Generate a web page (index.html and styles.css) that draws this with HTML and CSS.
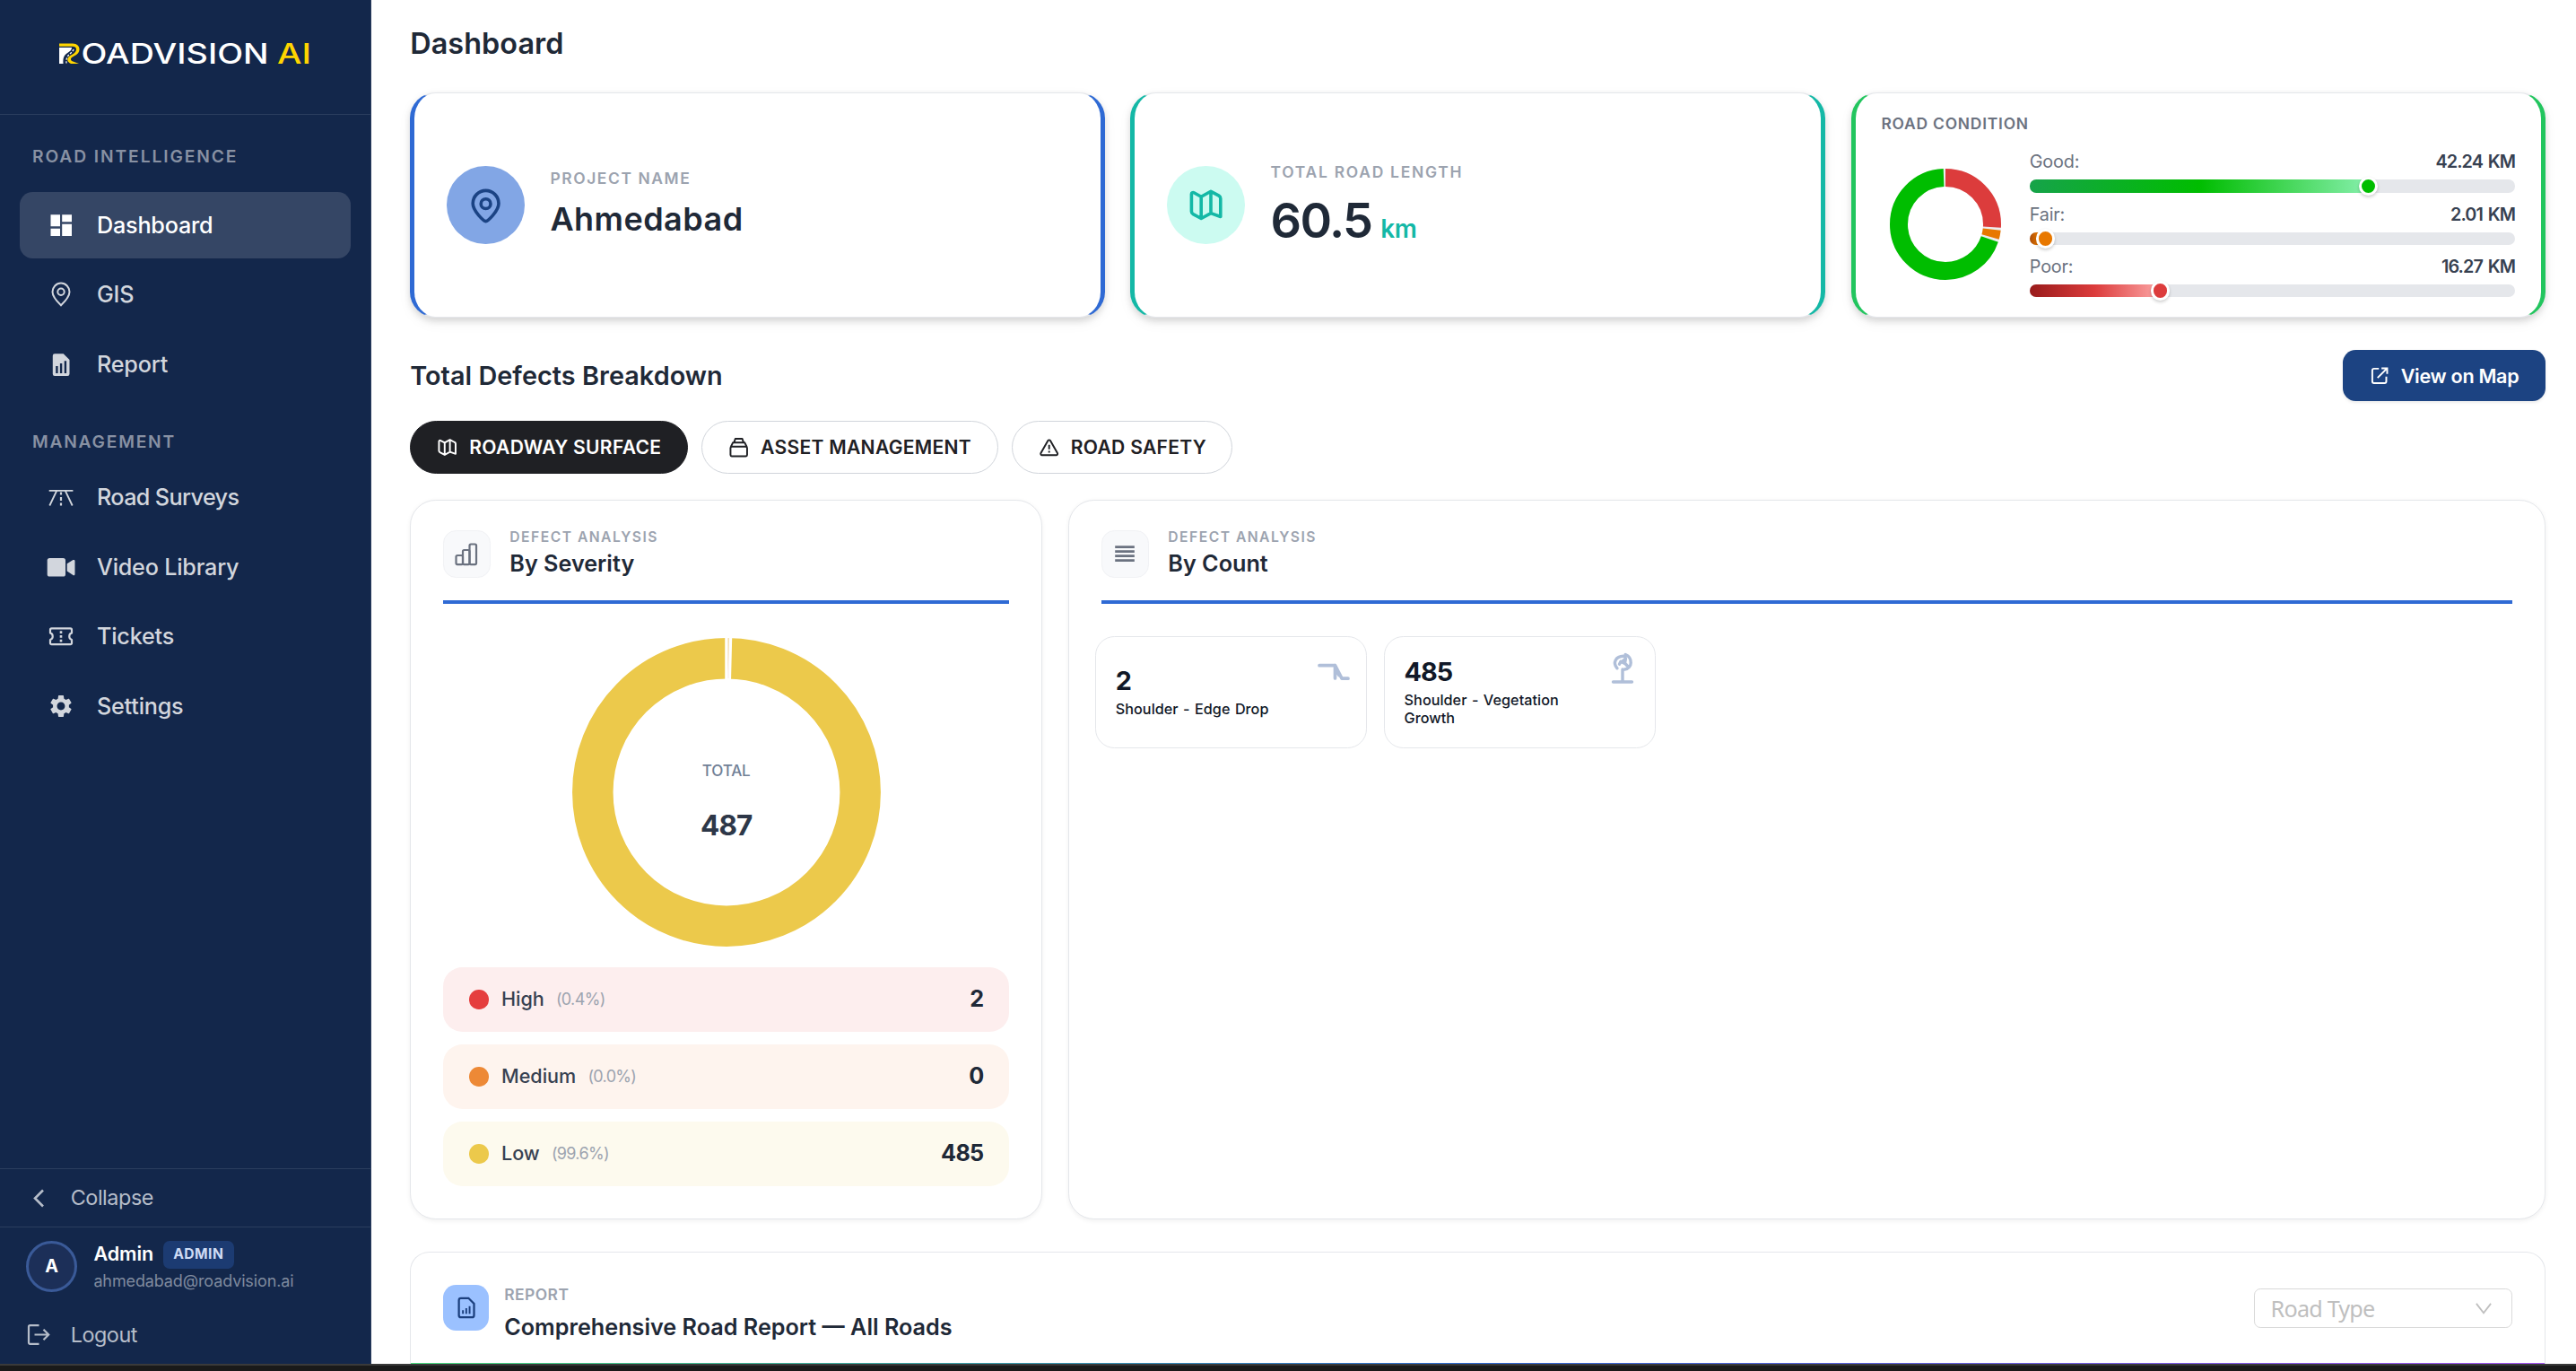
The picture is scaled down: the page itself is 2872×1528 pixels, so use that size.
FILE: index.html
```html
<!DOCTYPE html>
<html lang="en">
<head>
<meta charset="utf-8">
<title>RoadVision AI</title>
<link rel="stylesheet" href="styles.css">
</head>
<body>
<div class="app">
  <aside class="sidebar">
    <div class="brand">
      <svg class="logo" viewBox="0 0 280 26">
        <path fill="#ffd500" d="M1 1.500h15c5 0 7.500 3 7.500 6.500 0 3.500-2 5.500-6 7.500-3.500 1.700-4.500 3.200-2.500 5.500l8 3h-9c-4-2-5-5-2-8 2-2 8-3.500 8-8 0-2.500-2-3.300-4-3.300H1z"/>
        <path fill="#fff" d="M1 6h14c0 3-2.500 4.500-5.500 6.500C6 15 5 18 5.500 24H1z"/>
        <path fill="none" stroke="#fff" stroke-width="1.300" stroke-dasharray="2.500 1.500" d="M17 8c-1.500 5-9 5-8 15.500"/>
        <text class="logo-word" x="25.500" y="24" textLength="209" lengthAdjust="spacingAndGlyphs">OADVISION</text>
        <text class="logo-word logo-ai" x="244" y="24" textLength="38" lengthAdjust="spacingAndGlyphs">AI</text>
      </svg>
    </div>
    <nav class="nav">
      <div class="nav-label">ROAD INTELLIGENCE</div>
      <div class="nav-items">
        <a class="nav-item active"><svg class="ni" viewBox="0 0 36 36" fill="currentColor"><path d="M6.500 6.300H17v12.900H6.500zM6.500 21.700H17V30H6.500zM19.200 6.300H30v8H19.200zM19.200 16.700H30V30H19.200z"/></svg><span>Dashboard</span></a>
        <a class="nav-item"><svg class="ni" viewBox="0 0 36 36" fill="none" stroke="currentColor" stroke-width="2"><path d="M18 30.300C13 25.500 8.500 20.500 8.500 15.300a9.500 9.700 0 0 1 19 0C27.500 20.500 23 25.500 18 30.300z"/><circle cx="18" cy="15.200" r="3.700"/></svg><span>GIS</span></a>
        <a class="nav-item"><svg class="ni" viewBox="0 0 36 36" fill="currentColor" fill-rule="evenodd"><path d="M11 6.200h9.700l6.800 6.800v15.700a2.200 2.200 0 0 1-2.200 2.200H11a2.200 2.200 0 0 1-2.200-2.200V8.400A2.200 2.200 0 0 1 11 6.200zM12.200 20v8h2.400v-8zM16.900 17v11h2.400V17zM21.700 14.200V28h2.400V14.200z"/></svg><span>Report</span></a>
      </div>
      <div class="nav-label second">MANAGEMENT</div>
      <div class="nav-items">
        <a class="nav-item"><svg class="ni" viewBox="0 0 36 36" fill="none" stroke="currentColor" stroke-width="1.800"><path d="M4.700 10.900h26.700M13.200 11L5.300 27.500M22.800 11l7.900 16.500"/><path d="M18 12.500v3M18 18v4M18 24.500v3" stroke-width="2.200"/></svg><span class="tight">Road Surveys</span></a>
        <a class="nav-item"><svg class="ni" viewBox="0 0 36 36" fill="currentColor"><rect x="2.700" y="8" width="20.300" height="20.600" rx="2.600"/><path d="M24.700 14.300l6.800-4.200a1.300 1.300 0 0 1 2 1v15a1.300 1.300 0 0 1-2 1l-6.800-4.600z"/></svg><span>Video Library</span></a>
        <a class="nav-item"><svg class="ni" viewBox="0 0 36 36" fill="none" stroke="currentColor" stroke-width="2.200" stroke-linejoin="round"><path d="M7.500 9.400h21a1.500 1.500 0 0 1 1.500 1.500v3.500a4 4 0 0 0 0 7.600v3.700a1.500 1.500 0 0 1-1.500 1.500h-21A1.500 1.500 0 0 1 6 25.700V22a4 4 0 0 0 0-7.600v-3.500a1.500 1.500 0 0 1 1.500-1.500z"/><path d="M18 12.200v2.800M18 17v2.800M18 21.700v2.800" stroke-width="2.600"/></svg><span>Tickets</span></a>
        <a class="nav-item"><svg class="ni" viewBox="0 0 36 36" fill="currentColor"><path transform="translate(3.100 3.100) scale(1.240)" d="M19.140 12.940c.04-.3.060-.61.060-.94 0-.32-.02-.64-.07-.94l2.030-1.580c.18-.14.230-.41.120-.61l-1.920-3.320c-.12-.22-.37-.29-.59-.22l-2.390.960c-.5-.38-1.030-.7-1.620-.94L14.400 2.810c-.04-.24-.24-.41-.48-.41h-3.840c-.24 0-.43.170-.47.410L9.250 5.350c-.59.240-1.130.57-1.620.94L5.240 5.330c-.22-.08-.47 0-.59.220L2.740 8.870c-.12.210-.08.470.120.610l2.030 1.580c-.05.300-.09.630-.09.940s.02.640.070.940l-2.030 1.580c-.18.140-.23.410-.12.610l1.920 3.320c.12.220.37.290.59.220l2.390-.96c.5.380 1.030.7 1.620.94l.36 2.540c.05.240.24.410.48.410h3.840c.24 0 .44-.17.470-.41l.36-2.540c.59-.24 1.130-.56 1.620-.94l2.390.96c.22.080.47 0 .59-.22l1.920-3.320c.12-.22.070-.47-.12-.61l-2.010-1.580zM12 15.600c-1.980 0-3.600-1.620-3.600-3.600s1.620-3.600 3.600-3.600 3.600 1.620 3.600 3.600-1.620 3.600-3.600 3.600z"/></svg><span>Settings</span></a>
      </div>
    </nav>
    <div class="collapse"><svg class="fi" viewBox="0 0 36 36" fill="none" stroke="currentColor" stroke-width="2.600"><path d="M23 9.500L14 18.500l9 9"/></svg><span>Collapse</span></div>
    <div class="account">
      <div class="user">
        <div class="avatar">A</div>
        <div class="user-info">
          <div class="user-row"><span class="user-name">Admin</span><span class="role">ADMIN</span></div>
          <div class="email">ahmedabad@roadvision.ai</div>
        </div>
      </div>
      <div class="logout"><svg class="fi" viewBox="0 0 36 36" fill="none" stroke="currentColor" stroke-width="2.200"><path d="M18.500 8.200H8.500a1.500 1.500 0 0 0-1.500 1.500v17.600a1.500 1.500 0 0 0 1.500 1.500h10M13.500 18.500h15M23.500 12.800l5.700 5.700-5.700 5.700"/></svg><span>Logout</span></div>
    </div>
  </aside>

  <main class="main">
    <h1 class="page-title">Dashboard</h1>
    <section class="cards">
      <div class="card blue">
        <div class="circle"><svg viewBox="0 0 24 24" fill="none" stroke="currentColor" stroke-width="2"><path d="M12 22c-1.200 0-8-6.300-8-11a8 8 0 0 1 16 0c0 4.700-6.800 11-8 11z"/><circle cx="12" cy="11.200" r="3"/></svg></div>
        <div><div class="card-label">PROJECT NAME</div><div class="card-name">Ahmedabad</div></div>
      </div>
      <div class="card teal">
        <div class="circle"><svg viewBox="0 0 24 24" fill="none" stroke="currentColor" stroke-width="2" stroke-linejoin="round"><path d="M3 5.200a1 1 0 0 1 1.500-.9L9 6.800l6-3.300 5 2.700a2 2 0 0 1 1 1.700v11.300L15 17l-6 3.300-5-2.700a2 2 0 0 1-1-1.700zM9 6.800v13.500M15 3.500V17"/></svg></div>
        <div><div class="card-label">TOTAL ROAD LENGTH</div><div class="card-value"><span class="num">60.5</span><span class="unit">km</span></div></div>
      </div>
      <div class="card green">
        <div class="cond-title">ROAD CONDITION</div>
        <div class="cond">
          <svg class="cond-donut" viewBox="0 0 144 144" fill="none" stroke-width="20">
            <g transform="rotate(-90 72 72)">
              <circle cx="72" cy="72" r="52" stroke="#ededf0"/>
              <circle cx="72" cy="72" r="52" stroke="#dc3c3c" pathLength="360" stroke-dasharray="93.500 266.500"/>
              <circle cx="72" cy="72" r="52" stroke="#e87800" pathLength="360" stroke-dasharray="9.400 350.600" stroke-dashoffset="-96.300"/>
              <circle cx="72" cy="72" r="52" stroke="#00bd00" pathLength="360" stroke-dasharray="249.200 110.800" stroke-dashoffset="-108.600"/>
            </g>
          </svg>
          <div class="bars">
            <div><div class="bar-head"><span>Good:</span><b>42.24 KM</b></div><div class="track"><div class="fill good" style="width:69.800%"><i></i></div></div></div>
            <div><div class="bar-head"><span>Fair:</span><b>2.01 KM</b></div><div class="track"><div class="fill fair" style="width:3.300%"><i></i></div></div></div>
            <div><div class="bar-head"><span>Poor:</span><b>16.27 KM</b></div><div class="track"><div class="fill poor" style="width:26.900%"><i></i></div></div></div>
          </div>
        </div>
      </div>
    </section>

    <div class="section-head">
      <h2>Total Defects Breakdown</h2>
      <button class="map-btn"><svg viewBox="0 0 24 24" fill="none" stroke="currentColor" stroke-width="2"><path d="M11.500 4H6a2 2 0 0 0-2 2v12.500a2 2 0 0 0 2 2h12a2 2 0 0 0 2-2V13M14.500 3.500H21V10M21 3.500L10 14.500"/></svg>View on Map</button>
    </div>

    <div class="tabs">
      <button class="tab on"><svg viewBox="0 0 24 24" fill="none" stroke="currentColor" stroke-width="2" stroke-linejoin="round"><path d="M2.500 5a1 1 0 0 1 1.500-.9L9 6.500l6-3.300 5 2.700a2 2 0 0 1 1.500 1.700v11.700L15 17l-6 3.500-5-2.700a2 2 0 0 1-1.500-1.700zM9 6.500v14M15 3.200V17"/></svg>ROADWAY SURFACE</button>
      <button class="tab"><svg viewBox="0 0 24 24" fill="none" stroke="currentColor" stroke-width="2" stroke-linejoin="round"><rect x="2.500" y="11" width="19" height="11" rx="1.500"/><path d="M3 11l2.500-5M21 11l-2.500-5M5 6.500h14M6.500 6.500L8 2h8l1.500 4.500"/></svg>ASSET MANAGEMENT</button>
      <button class="tab"><svg viewBox="0 0 24 24" fill="none" stroke="currentColor" stroke-width="2" stroke-linejoin="round"><path d="M10.700 4.200a1.500 1.500 0 0 1 2.600 0l8.200 14.300a1.500 1.500 0 0 1-1.300 2.200H3.800a1.500 1.500 0 0 1-1.300-2.200zM12 9v5M12 15.800v2.200"/></svg>ROAD SAFETY</button>
    </div>

    <section class="panels">
      <div class="panel">
        <div class="panel-head">
          <div class="panel-icon"><svg viewBox="0 0 32 32" fill="none" stroke="currentColor" stroke-width="2.200"><rect x="4.500" y="18" width="7.500" height="10" rx="1.500"/><rect x="12" y="12" width="7.500" height="16" rx="1.500"/><rect x="19.500" y="5.500" width="7.500" height="22.500" rx="1.500"/></svg></div>
          <div><div class="eyebrow">DEFECT ANALYSIS</div><div class="panel-title">By Severity</div></div>
        </div>
        <div class="donut">
          <svg viewBox="0 0 344 344">
            <circle cx="172" cy="172" r="149.200" fill="none" stroke="#ecc94b" stroke-width="45.500"/>
            <path d="M172 -1V47M176.500 -1L175.300 47" stroke="#fff" stroke-width="3.500"/>
            <path d="M174.300 0L174 45" stroke="#f3dede" stroke-width=".7"/>
          </svg>
          <div class="donut-text"><span>TOTAL</span><b>487</b></div>
        </div>
        <div class="legend">
          <div class="row high"><i></i><span>High</span><small>(0.4%)</small><b>2</b></div>
          <div class="row medium"><i></i><span>Medium</span><small>(0.0%)</small><b>0</b></div>
          <div class="row low"><i></i><span>Low</span><small>(99.6%)</small><b>485</b></div>
        </div>
      </div>
      <div class="panel">
        <div class="panel-head">
          <div class="panel-icon"><svg viewBox="0 0 32 32" fill="none" stroke="currentColor" stroke-width="2.700"><path d="M5.200 8.700h21.600M5.200 13.700h21.600M5.200 18.700h21.600M5.200 23.700h21.600"/></svg></div>
          <div><div class="eyebrow">DEFECT ANALYSIS</div><div class="panel-title">By Count</div></div>
        </div>
        <div class="tiles">
          <div class="tile"><div class="tile-text"><b>2</b><span>Shoulder - Edge Drop</span></div><svg viewBox="0 0 36 36" fill="none" stroke="currentColor" stroke-width="3.700" stroke-linecap="round" stroke-linejoin="round"><path d="M2 14.700h17.500V29M19.500 14.700L27 29.200h7M20.500 19l3.500 6.500"/></svg></div>
          <div class="tile"><div class="tile-text"><b>485</b><span>Shoulder - Vegetation Growth</span></div><svg viewBox="0 0 36 36" fill="none" stroke="currentColor" stroke-width="3.400" stroke-linecap="round" stroke-linejoin="round"><path d="M7.500 33h21M18 33V19M12 17.800C6.500 11.500 10.500 4.500 19 4.300M21.200 2.500c8.300 3.500 8 15.500-.7 16.500M21 3.500v4l-4.500 3.500M21.500 7l-1 5 4 4.500M14.500 13.200l1.500-3 4 2" /></svg></div>
        </div>
      </div>
    </section>

    <section class="report">
      <div class="report-head">
        <div class="report-icon"><svg viewBox="0 0 24 24" fill="none" stroke="currentColor" stroke-width="2"><path d="M7 2.500h7.500L20 8v11.500a2 2 0 0 1-2 2H7a2 2 0 0 1-2-2v-15a2 2 0 0 1 2-2z"/><path d="M9 18v-3.500M12.300 18v-5.500M15.600 18v-7.500" stroke-width="1.700"/></svg></div>
        <div class="report-text"><div class="report-eyebrow">REPORT</div><div class="report-title">Comprehensive Road Report — All Roads</div></div>
        <div class="select"><span>Road Type</span><svg viewBox="0 0 20 14" fill="none" stroke="currentColor" stroke-width="2"><path d="M1 1l9 11.500L19 1"/></svg></div>
      </div>
      <div class="report-line"></div>
    </section>
  </main>
</div>
<div class="dock"></div>
</body>
</html>
```
FILE: styles.css
```css
html { zoom: 1.8; }
* { box-sizing: border-box; }
body { margin: 0; overflow: hidden; background: #fff; color: #1f2937; font-family: "Inter", sans-serif; }
h1, h2 { margin: 0; font-weight: 600; }
button { font-family: inherit; margin: 0; border: 0; }
svg { display: block; flex: none; overflow: visible; }

.app { display: flex; height: 844.45px; overflow: hidden; }
.dock { height: 4.6px; background: #1a1a1a; border-top: 1.2px solid #3a3a3a; }

/* Sidebar */
.sidebar { width: 230px; flex: none; display: flex; flex-direction: column; background: #13274b; border-right: 1px solid #2a3d5e; color: #fff; }
.brand { height: 71px; border-bottom: 1px solid #2b3d5e; padding: 26.1px 0 0 36.1px; }
.logo { width: 155.6px; height: 14.45px; }
.logo-word { font: 500 30.6px "Inter", sans-serif; fill: #fff; }
.logo-ai { fill: #ffd500; }
.nav { flex: 1; padding: 17.7px 12px 0; }
.nav-label { font-size: 10.7px; font-weight: 600; line-height: 16px; letter-spacing: 1.05px; color: #8891a3; padding-left: 8px; margin-bottom: 14.1px; }
.nav-label.second { margin: 19.7px 0 6px; letter-spacing: .97px; }
.nav-items { display: flex; flex-direction: column; gap: 2px; }
.nav-item { display: flex; align-items: center; gap: 12px; height: 41px; padding: 0 16px; border-radius: 8px; font-size: 14px; font-weight: 500; letter-spacing: -.12px; color: #d2d6dd; }
.nav-item.active { background: #354665; color: #fff; }
.ni { width: 20px; height: 20px; }
.tight { letter-spacing: -.35px; }
.collapse { display: flex; align-items: center; height: 35.9px; border-top: 1px solid #2b3d5e; padding-left: 14px; gap: 9.7px; font-size: 13px; letter-spacing: -.24px; color: #b6bdc9; }
.collapse span { margin-top: -1px; }
.fi { width: 20px; height: 20px; }
.account { border-top: 1px solid #2b3d5e; height: 85.1px; padding: 8.2px 16px 0; }
.user { display: flex; gap: 10px; }
.avatar { width: 32px; height: 32px; border-radius: 50%; border: 2px solid #3a5a98; background: #1c2f58; display: flex; align-items: center; justify-content: center; font-size: 11px; font-weight: 700; }
.user-row { display: flex; gap: 6px; align-items: center; height: 17.2px; }
.user-name { font-size: 12px; font-weight: 600; line-height: 16px; margin-top: -.6px; letter-spacing: -.05px; }
.role { height: 17.2px; line-height: 16.4px; padding: 0 6.3px; border-radius: 4px; background: #1c3b72; color: #cfdcf5; font-size: 8.7px; font-weight: 700; letter-spacing: .25px; }
.email { font-size: 10px; line-height: 15.4px; letter-spacing: -.07px; color: #7f8a9e; }
.logout { display: flex; align-items: center; gap: 9.7px; margin: 15.6px 0 0 -2px; height: 20px; font-size: 13px; letter-spacing: -.26px; color: #b6bdc9; }

/* Main column */
.main { flex: 1; min-width: 0; padding: 13.3px 18.9px 0 24px; display: flex; flex-direction: column; }
.page-title { font-size: 18px; line-height: 28px; margin-bottom: 15.9px; letter-spacing: .04px; }
.cards { display: grid; grid-template-columns: repeat(3, 1fr); gap: 16px; height: 139.6px; flex: none; }
.card { display: flex; align-items: center; gap: 16px; padding: 0 20px; border: 1px solid #e5e7eb; border-left: 3px solid; border-right: 3px solid; border-radius: 16px; background: #fff; box-shadow: 0 2px 4px rgba(0,0,0,.12), 0 3px 8px rgba(0,0,0,.05); }
.card.blue { border-left-color: #2f6ad4; border-right-color: #2f6ad4; }
.card.teal { border-left-color: #14b8a6; border-right-color: #14b8a6; }
.card.green { border-left-color: #22c55e; border-right-color: #22c55e; display: block; padding: 11.6px 16px 0 16px; }
.circle { width: 48px; height: 48px; border-radius: 50%; display: flex; align-items: center; justify-content: center; }
.circle svg { width: 24px; height: 24px; }
.blue .circle { background: #82a6e5; color: #1b4384; }
.teal .circle { background: #ccfbf1; color: #14b8a6; }
.card-label { font-size: 9.7px; font-weight: 600; letter-spacing: .88px; line-height: 16px; color: #9ca3af; margin-top: -1.6px; }
.teal .card-label { margin-top: 3.4px; letter-spacing: .96px; }
.card-name { font-size: 20px; font-weight: 600; line-height: 28px; letter-spacing: .26px; margin-top: 3.3px; }
.card-value { display: flex; align-items: baseline; line-height: 34px; margin-top: 4.6px; gap: 5.5px; }
.num { font-size: 30px; font-weight: 600; letter-spacing: -.9px; }
.unit { font-size: 15.5px; font-weight: 600; letter-spacing: -.2px; color: #14b8a6; }
.cond-title { font-size: 9.7px; font-weight: 600; letter-spacing: .43px; line-height: 14px; color: #6b7280; margin-bottom: 10.2px; }
.cond { display: flex; align-items: center; gap: 11.9px; }
.cond-donut { width: 80px; height: 80px; }
.bars { flex: 1; display: flex; flex-direction: column; gap: 6.7px; }
.bar-head { display: flex; justify-content: space-between; font-size: 11px; line-height: 14.4px; letter-spacing: -.1px; color: #6b7280; margin-bottom: 3.3px; }
.bar-head b { font-weight: 600; letter-spacing: -.5px; word-spacing: 1px; color: #374151; }
.track { height: 8px; border-radius: 4px; background: #e5e7eb; }
.fill { position: relative; height: 8px; border-radius: 4px; }
.fill i { position: absolute; right: -6px; top: -2px; width: 12px; height: 12px; border-radius: 50%; border: 2px solid #fff; box-shadow: 0 1px 2px rgba(0,0,0,.2); }
.good { background: linear-gradient(90deg, #16a34a, #00bd00 50%, #86efac); }
.good i { background: #00bd00; }
.fair { background: linear-gradient(90deg, #a84a08, #e87800 50%, #fdba74); }
.fair i { background: #e87800; }
.poor { background: linear-gradient(90deg, #991b1b, #dc3c3c 50%, #fca5a5); }
.poor i { background: #dc3c3c; }

.section-head { display: flex; justify-content: space-between; align-items: center; margin-top: 20px; height: 31.7px; flex: none; }
.section-head h2 { font-size: 16px; letter-spacing: .03px; }
.map-btn { display: flex; align-items: center; gap: 7px; height: 31.7px; width: 125.6px; padding: 0 0 0 16px; border-radius: 8px; background: #1c4382; color: #fff; font-size: 12px; font-weight: 600; letter-spacing: -.16px; white-space: nowrap; box-shadow: 0 1px 2px rgba(0,0,0,.08); }
.map-btn svg { width: 13px; height: 13px; }
.tabs { display: flex; gap: 8px; margin-top: 12.2px; flex: none; }
.tab { display: flex; align-items: center; gap: 7px; height: 32.8px; padding: 0 16.2px; border-radius: 17px; border: 1px solid #d1d5db; background: #fff; color: #1f2024; font-size: 11.7px; font-weight: 600; letter-spacing: .17px; white-space: nowrap; }
.tab:last-child { padding-right: 15.4px; }
.tab svg { width: 13px; height: 13px; }
.tab.on { background: #1f2024; border-color: #1f2024; color: #fff; }

/* Defect panels */
.panels { display: grid; grid-template-columns: 391.7px 1fr; gap: 16.1px; height: 445.4px; margin-top: 16.1px; flex: none; }
.panel { border: 1px solid #e5e7eb; border-radius: 16px; background: #fff; padding: 15.8px 20px 0; box-shadow: 0 1px 3px rgba(0,0,0,.06); }
.panel-head { display: flex; align-items: center; gap: 12px; height: 48.2px; padding-bottom: 12px; border-bottom: 2.3px solid #2f6ad4; }
.panel-icon { width: 29.2px; height: 29.2px; border: 1px solid #f1f2f5; border-radius: 8px; background: #f8f9fb; color: #6b7280; display: flex; align-items: center; justify-content: center; }
.panel-icon svg { width: 17.8px; height: 17.8px; }
.eyebrow { font-size: 8.7px; line-height: 13px; font-weight: 600; letter-spacing: .82px; color: #9ca3af; }
.panel-title { font-size: 14px; line-height: 20.6px; font-weight: 600; }
.donut { display: grid; place-items: center; margin: 21px 0 12.7px; }
.donut > * { grid-area: 1 / 1; }
.donut svg { width: 191.1px; height: 191.1px; }
.donut-text { display: flex; flex-direction: column; align-items: center; margin-top: 13.8px; }
.donut-text span { font-size: 9.5px; line-height: 14px; font-weight: 500; letter-spacing: -.1px; color: #718096; }
.donut-text b { font-size: 17.5px; line-height: 28px; font-weight: 700; letter-spacing: -.5px; color: #2d3748; margin-top: 13.2px; }
.legend { display: flex; flex-direction: column; gap: 8px; }
.row { display: flex; align-items: center; height: 39.8px; padding: 0 16px; border-radius: 12px; }
.row i { width: 12px; height: 12px; border-radius: 50%; margin-right: 8px; }
.row span { font-size: 12px; font-weight: 500; color: #374151; margin: -.8px 7.3px 0 0; }
.row small { font-size: 10px; letter-spacing: -.36px; color: #9ca3af; margin-top: -.6px; }
.row b { margin: -.6px 0 0 auto; font-size: 14px; font-weight: 700; letter-spacing: -.4px; }
.high { background: #fdeeee; } .high i { background: #e53e3e; }
.medium { background: #fef4ee; } .medium i { background: #ed8936; }
.low { background: #fdfaee; } .low i { background: #ecc94b; }

.tiles { display: flex; gap: 10.3px; margin: 19.8px 0 0 -4px; }
.tile { width: 168.5px; height: 69.6px; display: flex; justify-content: space-between; padding: 9.200px 10px 0 12.1px; border: 1px solid #e5e7eb; border-radius: 12px; color: #b0bfd9; }
.tile svg { width: 20px; height: 20px; }
.tile-text { align-self: center; width: 115px; margin-bottom: 12px; color: #111827; }
.tile-text b { display: block; font-size: 16px; line-height: 23px; font-weight: 700; letter-spacing: -.55px; }
.tile-text span { display: block; font-size: 9px; line-height: 11.2px; font-weight: 500; margin-top: .4px; word-spacing: .6px; letter-spacing: .02px; }

/* Report card */
.report { margin-top: 20.3px; border: 1px solid #e5e7eb; border-bottom: 0; border-radius: 12px 12px 0 0; flex: none; }
.report-head { display: flex; align-items: flex-start; height: 68.1px; padding: 15.7px 20px 0; }
.report-icon { width: 28.3px; height: 28.3px; margin-top: 4.1px; border-radius: 8px; background: #9bc1ff; color: #1b3f7d; display: flex; align-items: center; justify-content: center; }
.report-icon svg { width: 15px; height: 15px; }
.report-text { margin-left: 9.5px; }
.report-eyebrow { font-size: 9.7px; line-height: 20px; font-weight: 600; letter-spacing: .25px; color: #9ca3af; }
.report-title { font-size: 14px; line-height: 20px; font-weight: 600; }
.select { margin-left: auto; margin-top: 6px; width: 160px; height: 24.8px; border: 1px solid #d9d9d9; border-radius: 4px; display: flex; align-items: center; justify-content: space-between; padding: 0 12px 0 9.800px; color: #bfbfbf; font: 14px "Noto Sans", sans-serif; letter-spacing: -.45px; }
.select svg { width: 10px; height: 7px; }
.report-line { height: 2px; background: linear-gradient(90deg, #4ade80, #2f6ad4 50%, #a855f7); }
```
